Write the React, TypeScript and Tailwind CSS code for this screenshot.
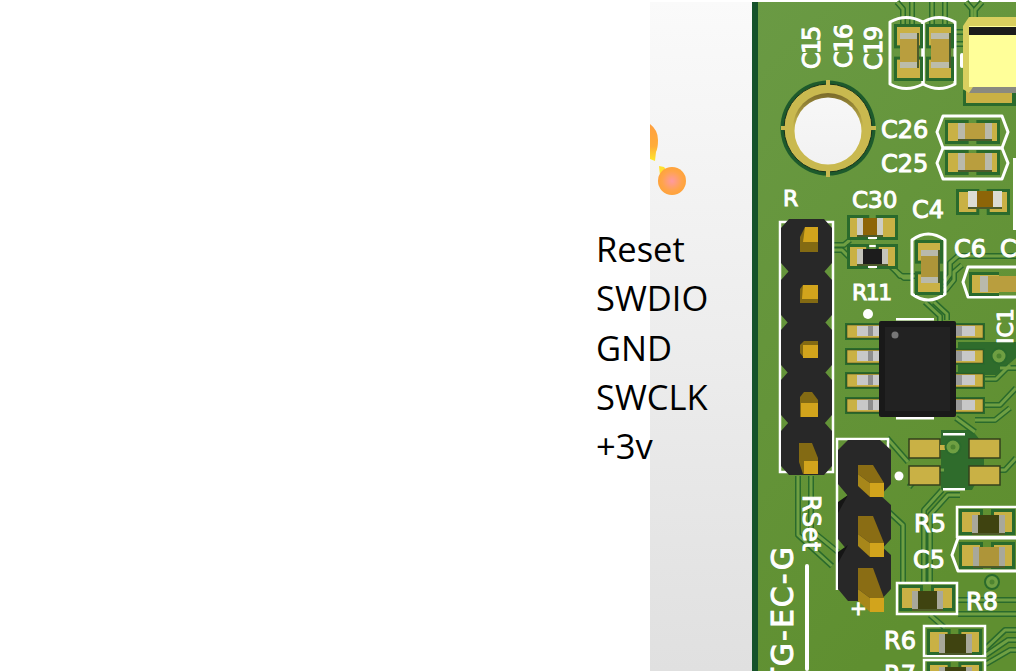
const labels = ["Reset", "SWDIO", "GND", "SWCLK", "+3v"];

const GOLD = "#c9b145";
const GAP = "#2a6a2c";

// silk screen text, all of it is real text with a thin stroke to get the fat rounded look
function Silk({ x, y, size = 24, rot, anchor, spacing, children }: { x: number; y: number; size?: number; rot?: number; anchor?: "end" | "start"; spacing?: number; children: string }) {
  return (
    <text
      x={rot ? 0 : x}
      y={rot ? 0 : y}
      transform={rot ? `translate(${x} ${y}) rotate(${rot})` : undefined}
      textAnchor={anchor}
      fontSize={size}
      letterSpacing={spacing}
      strokeWidth={1}
      className="fill-white stroke-white font-['DejaVu_Sans']"
    >
      {children}
    </text>
  );
}

interface ChipProps {
  p0: number;
  p1: number;
  a0: number;
  a1: number;
  b0: number;
  b1: number;
  c0: number;
  c1: number;
  body: string;
  cap?: string;
  capW?: number;
  vertical?: boolean;
}

// two pad smd part. p = pad extent along the part, a = pad extent across,
// b = body extent along, c = body extent across
function Chip({ p0, p1, a0, a1, b0, b1, c0, c1, body, cap = "#b9b9ab", capW = 6, vertical }: ChipProps) {
  const r = (s: number, e: number, t: number, u: number, fill: string) =>
    vertical ? <rect x={t} y={s} width={u - t} height={e - s} fill={fill} /> : <rect x={s} y={t} width={e - s} height={u - t} fill={fill} />;
  const padLen = (p1 - p0) * 0.36;
  return (
    <g>
      {r(p0 - 3, p0 + padLen + 3, a0 - 3, a1 + 3, GAP)}
      {r(p1 - padLen - 3, p1 + 3, a0 - 3, a1 + 3, GAP)}
      {r(p0, p0 + padLen, a0, a1, GOLD)}
      {r(p1 - padLen, p1, a0, a1, GOLD)}
      {r(b0, b1, c0 + 3, c1 + 2, "#4d5a2a")}
      {r(b0, b1, c0, c1, body)}
      {r(b0, b0 + capW, c0, c1, cap)}
      {r(b1 - capW, b1, c0, c1, cap)}
    </g>
  );
}

function Outline({ d }: { d: string }) {
  return <path d={d} fill="none" stroke="#fff" strokeWidth={3} strokeLinejoin="round" />;
}

const traces = [
  "M897 2 L903 9 V28",
  "M912 2 V28",
  "M932 2 V28",
  "M945 2 V28",
  "M966 2 L972 9 V18",
  "M982 2 L975 10 V18",
  "M952 32 H963",
  "M952 44 H963",
  "M834 245 H844 L850 240",
  "M834 250 H842 L850 258",
  "M888 256 H893 V268 L900 276 H916",
  "M912 278 H904 L890 266",
  "M940 282 H945 L950 275 V263 L958 256 H1016",
  "M940 290 H946 L954 280 V272 L962 265",
  "M925 302 L940 316 V324",
  "M934 302 L947 314 V320",
  "M798 476 V535 L832 566",
  "M811 476 V530 L838 552",
  "M889 512 L903 525 V582",
  "M887 438 L908 462",
  "M909 487 L924 470 L944 470",
  "M924 582 V510 L942 490",
  "M930 582 V515 L948 495 H960",
  "M958 614 H1016",
  "M958 600 H1016",
  "M930 615 L945 628",
  "M1000 368 H1016",
  "M983 379 H996 L1010 365",
  "M983 405 H1000 L1016 388",
  "M956 418 L975 432",
  "M975 420 H995 L1010 408",
  "M1000 470 H1005 L1016 458",
  "M986 648 L1005 630 H1016",
  "M986 655 L1008 640 H1016",
  "M986 664 L1010 650 H1016",
];

const icRows = [325, 350, 374, 399];

export default function App() {
  return (
    <div className="flex h-[671px] w-[1016px] overflow-hidden bg-white">
      <div className="relative z-10 w-[650px] shrink-0 pl-[596px] pt-[224px] font-['Open_Sans',sans-serif] text-[34.5px] leading-[49.3px] whitespace-nowrap text-black">
        {labels.map((l) => (
          <div key={l}>{l}</div>
        ))}
      </div>

      <div className="relative mt-[2px] w-[102px] shrink-0 bg-gradient-to-b from-[#fafafa] to-[#e0e0e0]">
        <svg className="absolute left-0 top-0" width="50" height="210" viewBox="650 2 50 210">
          <defs>
            <radialGradient id="blob">
              <stop offset="0" stopColor="#ff99a0" />
              <stop offset="0.7" stopColor="#ffa44a" />
              <stop offset="1" stopColor="#ffa33a" />
            </radialGradient>
            <linearGradient id="blob2" x1="0" y1="0" x2="0" y2="1">
              <stop offset="0" stopColor="#ffa040" />
              <stop offset="0.6" stopColor="#ffac3a" />
              <stop offset="1" stopColor="#ffe92a" />
            </linearGradient>
          </defs>
          <path d="M650 124 Q658 130 658 140 Q658 148 656 152 L655 161 L650 159 Z" fill="url(#blob2)" />
          <path d="M659 166 L664 167 L668 172 L660 176 Z" fill="#ffe030" />
          <circle cx="672" cy="181" r="14" fill="url(#blob)" />
        </svg>
      </div>

      <svg className="block shrink-0" width="264" height="671" viewBox="752 0 264 671">
        <defs>
          <linearGradient id="pcb" x1="0" y1="0" x2="0.4" y2="1">
            <stop offset="0" stopColor="#6a9a44" />
            <stop offset="1" stopColor="#5f8f30" />
          </linearGradient>
          <linearGradient id="bevel" x1="0" y1="0" x2="0" y2="1">
            <stop offset="0" stopColor="#7a6a2a" />
            <stop offset="0.5" stopColor="#c9b94f" />
          </linearGradient>
          <linearGradient id="hole" x1="0" y1="0" x2="0" y2="1">
            <stop offset="0" stopColor="#f7f7f7" />
            <stop offset="1" stopColor="#f2f2f2" />
          </linearGradient>
        </defs>

        <rect x="752" y="2" width="264" height="669" fill="url(#pcb)" />
        <rect x="752" y="2" width="6" height="669" fill="#15522a" />

        {/* darker copper plane */}
        <path d="M958 342 H1016 V358 L996 375 H958 Z" fill="#2f6c2c" />
        <path d="M941 430 H972 L984 445 V468 L972 490 H941 Z" fill="#2f6c2c" />

        <g fill="none" strokeLinejoin="round">
          {traces.map((d, i) => (
            <path key={i} d={d} stroke={GAP} strokeWidth={6} />
          ))}
          {traces.map((d, i) => (
            <path key={i} d={d} stroke="#6f9f42" strokeWidth={3} />
          ))}
        </g>

        {/* mounting hole */}
        <circle cx="828" cy="128" r="47.5" fill="#1d5a2c" />
        <circle cx="828" cy="128" r="44" fill="#c9b94f" stroke="#14321c" strokeWidth="1" />
        <circle cx="828" cy="128" r="35" fill="url(#bevel)" />
        <circle cx="828" cy="131" r="33.5" fill="url(#hole)" />
        <path d="M826 80 h4 v6 h-4z M826 170 h4 v7 h-4z M781 126 h6 v4 h-6z M869 126 h7 v4 h-7z" fill="#c9b94f" />

        {/* top caps */}
        <Outline d="M890 22 Q906 13 923 22 V84 Q906 93 890 84 Z" />
        <Outline d="M923 22 Q939 13 955 22 V84 Q939 93 923 84 Z" />
        <Chip vertical p0={27} p1={78} a0={897} a1={920} b0={33} b1={68} c0={900} c1={917} body="#b99e3e" cap="#bcbcaa" />
        <Chip vertical p0={27} p1={78} a0={929} a1={951} b0={33} b1={68} c0={931} c1={949} body="#b99e3e" cap="#bcbcaa" />
        <rect x="960" y="53" width="4" height="15" rx="2" fill="#fff" />

        {/* big yellow part */}
        <rect x="963" y="90" width="53" height="16" fill={GAP} />
        <rect x="966" y="90" width="46" height="13" fill={GOLD} />
        <path d="M969 17 H1016 V93 H969 L963 89 V26 Z" fill="#d9cf5f" />
        <rect x="969" y="26" width="47" height="61" fill="#ffff99" />
        <rect x="969" y="27" width="47" height="8" fill="#1c1c1c" />
        <path d="M969 93 L973 87 H1016 V93 Z" fill="#8a8a80" />

        {/* C26 C25 */}
        <Outline d="M943 116 H1002 L1008 132 L1002 148 H943 L937 132 Z" />
        <Outline d="M943 148 H1002 L1008 163 L1002 179 H943 L937 163 Z" />
        <Chip p0={948} p1={997} a0={123} a1={141} b0={958} b1={992} c0={123} c1={139} body="#b99e3e" capW={7} />
        <Chip p0={948} p1={997} a0={153} a1={172} b0={958} b1={992} c0={153} c1={170} body="#b99e3e" capW={7} />
        <rect x="1013" y="158" width="3" height="72" fill="#fff" />

        {/* C30 and the black one below it */}
        <Chip p0={850} p1={895} a0={218} a1={237} b0={857} b1={883} c0={218} c1={235} body="#8d6508" cap="#cdcdc4" />
        <rect x="868" y="237" width="9" height="2" fill="#fff" />
        <rect x="868" y="245" width="9" height="2" fill="#fff" />
        <Chip p0={850} p1={895} a0={247} a1={266} b0={857} b1={888} c0={249} c1={264} body="#1c1c1c" cap="#c4c4ba" capW={6} />
        <rect x="868" y="266" width="9" height="2" fill="#fff" />

        {/* C4 */}
        <Chip p0={959} p1={1007} a0={192} a1={212} b0={968} b1={1002} c0={191} c1={207} body="#8d6508" cap="#dcdcd4" capW={9} />

        {/* C6 */}
        <Outline d="M912 240 Q928 228 945 240 V294 Q928 306 912 294 Z" />
        <Chip vertical p0={243} p1={292} a0={918} a1={940} b0={250} b1={283} c0={921} c1={938} body="#ae9539" cap="#b9b9ab" />

        {/* cap next to IC1 */}
        <Outline d="M1016 267 H968 L963 282 L968 297 H1016" />
        <rect x="969" y="272" width="30" height="24" fill={GAP} />
        <rect x="972" y="275" width="27" height="18" fill={GOLD} />
        <rect x="980" y="276" width="36" height="16" fill="#b99e3e" />
        <rect x="980" y="276" width="8" height="16" fill="#b9b9ab" />

        {/* first header */}
        <rect x="780" y="222" width="53" height="250" fill="none" stroke="#fff" strokeWidth="2.5" />
        {[219, 271, 321, 371, 422].map((y) => (
          <path key={y} d={`M789 ${y} H824 L832 ${y + 9} V${y + 44} L824 ${y + 53} H789 L781 ${y + 44} V${y + 9} Z`} fill="#282828" />
        ))}
        <path d="M805 227 H818 V242 L818 252 H800 V237 Z" fill="#836a13" />
        <path d="M805 227 H818 V242 H803 Z" fill="#d2a41c" />
        <path d="M803 285 H818 V303 H800 V289 Z" fill="#836a13" />
        <path d="M803 285 H818 V299 H802 Z" fill="#d2a41c" />
        <path d="M800 345 L804 341 H818 V358 H804 L800 353 Z" fill="#836a13" />
        <rect x="803" y="345" width="15" height="13" fill="#d2a41c" />
        <path d="M800 397 L804 392 H812 L818 400 V417 H800 Z" fill="#836a13" />
        <rect x="801" y="403" width="17" height="14" fill="#d2a41c" />
        <path d="M799 443 H812 L818 458 V474 H803 L799 462 Z" fill="#836a13" />
        <rect x="804" y="461" width="14" height="13" fill="#d2a41c" />

        {/* second header, pins at an angle */}
        <path d="M837 590 V439 H888 V450" fill="none" stroke="#fff" strokeWidth="2.5" />
        {[440, 495, 545].map((y) => (
          <path key={y} d={`M848 ${y} H880 L891 ${y + 10} V${y + 44} L880 ${y + 56} H848 L838 ${y + 44} V${y + 10} Z`} fill="#282828" />
        ))}
        <path d="M838 502 L848 495 L838 513 Z M838 552 L848 545 L838 563 Z" fill="#151515" />
        {[465, 516, 568].map((top, i) => {
          const sq = [483, 543, 598][i];
          return (
            <g key={top}>
              <path d={`M858 ${top} H873 L884 ${sq} H870 L858 ${sq - 9} Z`} fill="#8a6d14" />
              <path d={`M858 ${sq - 9} L870 ${sq} V${sq + 14} L858 ${sq + 3} Z`} fill="#a8871a" />
              <rect x="870" y={sq} width="14" height="14" fill="#d2a41c" />
            </g>
          );
        })}

        {/* IC */}
        <rect x="896" y="318" width="38" height="2.5" fill="#fff" />
        <rect x="896" y="417" width="38" height="2.5" fill="#fff" />
        <circle cx="868" cy="314" r="5" fill="#fff" />
        {icRows.map((y) => (
          <g key={y}>
            <rect x="845" y={y - 2} width="36" height="17" fill={GAP} />
            <rect x="847" y={y} width="34" height="13" fill={GOLD} stroke="#3a3a16" strokeWidth="0.5" />
            <rect x="857" y={y + 1} width="22" height="10" fill="#c8c8c8" />
            <rect x="868" y={y + 1} width="5" height="10" fill="#8e8e8e" />
            <rect x="955" y={y - 2} width="30" height="17" fill={GAP} />
            <rect x="955" y={y} width="28" height="13" fill={GOLD} stroke="#3a3a16" strokeWidth="0.5" />
            <rect x="956" y={y + 1} width="19" height="10" fill="#c8c8c8" />
            <rect x="956" y={y + 1} width="6" height="10" fill="#9a9a9a" />
          </g>
        ))}
        <rect x="879" y="321" width="77" height="96" rx="2" fill="#191919" />
        <rect x="885" y="327" width="65" height="84" fill="#222222" />
        <circle cx="895" cy="335" r="3.5" fill="#777" />
        <circle cx="999" cy="356" r="7.5" fill="#6f9f42" stroke={GAP} strokeWidth="2" />
        <circle cx="999" cy="356" r="2.5" fill="#4e8430" />

        {/* four pad part */}
        <rect x="943" y="433" width="22" height="2.5" fill="#fff" />
        <rect x="943" y="488" width="22" height="2.5" fill="#fff" />
        <circle cx="899" cy="476" r="4.5" fill="#fff" />
        {[
          [909, 439],
          [909, 466],
          [969, 439],
          [969, 466],
        ].map(([x, y]) => (
          <rect key={`${x}-${y}`} x={x} y={y} width="31" height="19" fill={GOLD} stroke="#33401c" strokeWidth="1.5" />
        ))}
        <path d="M940 445 H948 V450 H940 Z" fill={GOLD} />
        <circle cx="953" cy="447" r="7.5" fill="#6f9f42" stroke={GAP} strokeWidth="2" />
        <circle cx="953" cy="447" r="2.5" fill="#4e8430" />

        {/* lower resistors */}
        <path d="M1016 507 H957 V537 H1016" fill="none" stroke="#fff" strokeWidth="2.5" />
        <Chip p0={962} p1={1012} a0={512} a1={532} b0={972} b1={1005} c0={515} c1={533} body="#3f4310" cap="#a8a89a" capW={6} />
        <Outline d="M1016 538 H958 L952 555 L958 571 H1016" />
        <Chip p0={962} p1={1012} a0={545} a1={566} b0={973} b1={1005} c0={547} c1={566} body="#ae9539" cap="#a8a89a" capW={6} />
        <rect x="897" y="583" width="60" height="31" fill="none" stroke="#fff" strokeWidth="2.5" />
        <Chip p0={902} p1={952} a0={588} a1={608} b0={912} b1={943} c0={591} c1={609} body="#3f4310" cap="#a8a89a" capW={6} />
        <circle cx="992" cy="582" r="7" fill="#6f9f42" stroke={GAP} strokeWidth="2" />
        <circle cx="992" cy="582" r="2.5" fill="#4e8430" />
        <rect x="924" y="626" width="61" height="30" fill="none" stroke="#fff" strokeWidth="2.5" />
        <Chip p0={930} p1={979} a0={632} a1={652} b0={939} b1={972} c0={634} c1={653} body="#3f4310" cap="#a8a89a" capW={6} />
        <path d="M924 671 V660 H985 V671" fill="none" stroke="#fff" strokeWidth="2.5" />
        <Chip p0={930} p1={979} a0={665} a1={680} b0={939} b1={972} c0={667} c1={680} body="#3f4310" cap="#a8a89a" capW={6} />

        {/* silk line and labels */}
        <rect x="805" y="564" width="4" height="107" rx="2" fill="#fff" />
        <Silk x={820} y={69} rot={-90} spacing={-2}>C15</Silk>
        <Silk x={852} y={68} rot={-90} spacing={-1.5}>C16</Silk>
        <Silk x={882} y={70} rot={-90} spacing={-1.5}>C19</Silk>
        <Silk x={881} y={138}>C26</Silk>
        <Silk x={881} y={172}>C25</Silk>
        <Silk x={783} y={206} size={22}>R</Silk>
        <Silk x={852} y={208} size={23}>C30</Silk>
        <Silk x={912} y={218}>C4</Silk>
        <Silk x={954} y={257}>C6</Silk>
        <Silk x={1000} y={257}>C2</Silk>
        <Silk x={852} y={300} size={22} spacing={-1.5}>R11</Silk>
        <Silk x={1013} y={344} rot={-90} size={22}>IC1</Silk>
        <Silk x={803} y={495} rot={90}>RSet</Silk>
        <Silk x={793} y={545} rot={-90} size={30} anchor="end" spacing={2}>TG-EC-G</Silk>
        <Silk x={850} y={615} size={20}>+</Silk>
        <Silk x={914} y={532}>R5</Silk>
        <Silk x={913} y={568}>C5</Silk>
        <Silk x={966} y={610}>R8</Silk>
        <Silk x={884} y={649}>R6</Silk>
        <Silk x={884} y={683}>R7</Silk>
      </svg>
    </div>
  );
}
